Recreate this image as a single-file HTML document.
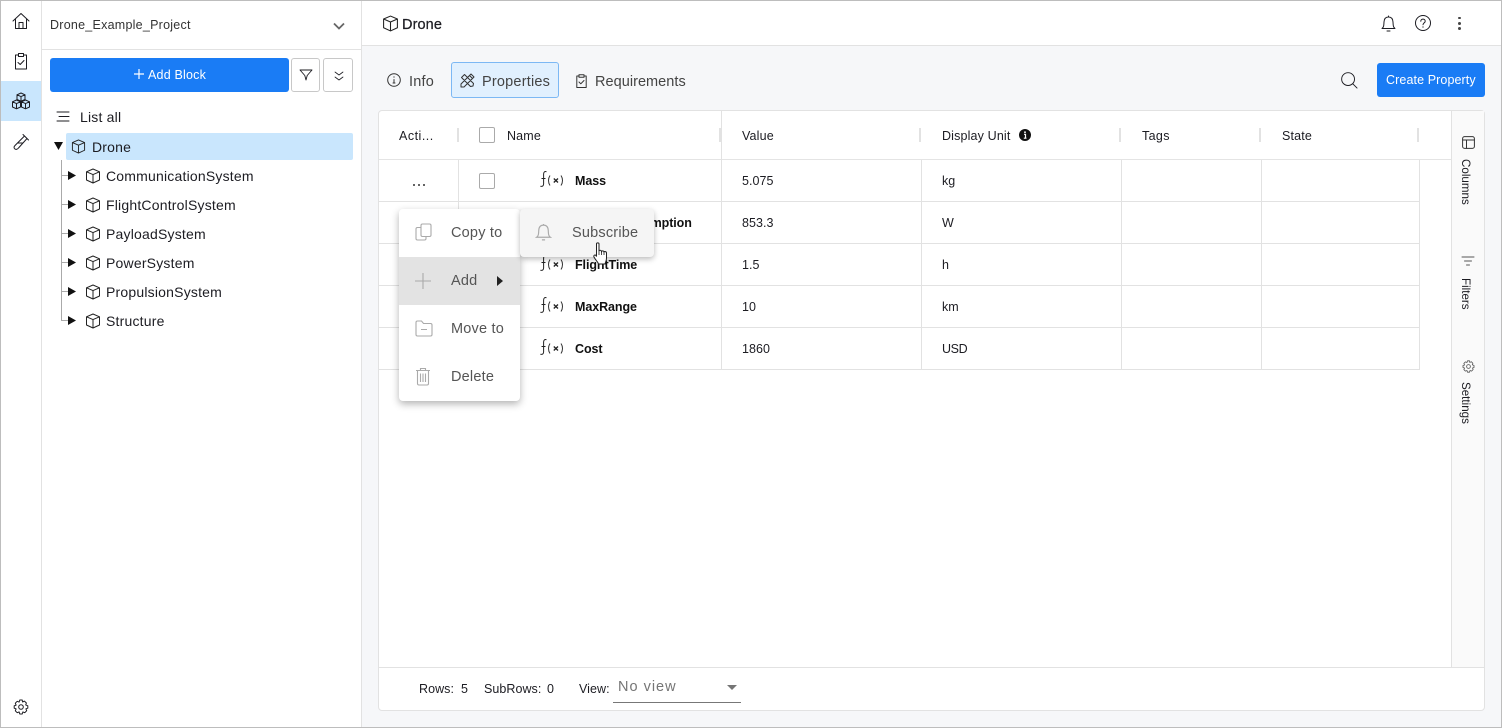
<!DOCTYPE html>
<html><head><meta charset="utf-8"><style>
html,body{margin:0;padding:0;background:#fff}
#p{position:relative;width:1502px;height:728px;overflow:hidden;background:#fff;font-family:"Liberation Sans",sans-serif;color:#1c1c22}
#p div,#p svg{position:absolute}
.t{white-space:nowrap;line-height:20px;height:20px}
.s{font-size:14px;letter-spacing:.2px}
.h{font-size:12.5px;letter-spacing:.15px;color:#1c1c22}
.c{font-size:12.5px;letter-spacing:.05px}
.b{font-size:12.5px;font-weight:bold;letter-spacing:-.08px;color:#111}
.m{font-size:14.5px;letter-spacing:.2px;color:#555}
.g{background:#e2e2e2}
.i{fill:none;stroke:#1c1c22;stroke-width:1;stroke-linejoin:round;stroke-linecap:round}
.v{writing-mode:vertical-rl;font-size:11.6px;letter-spacing:0;white-space:nowrap}
</style></head><body><div id="p">
<svg width="0" height="0"><defs>
<symbol id="cube" viewBox="0 0 16 16"><path d="M8 1 14.5 3.8V12L8 15 1.5 12V3.8ZM1.5 3.8 8 6.6 14.5 3.8M8 6.600V15" fill="none" stroke="currentColor" stroke-width="1" stroke-linejoin="round"/></symbol>
<symbol id="fx" viewBox="0 0 26 20"><path d="M8.500 2.800C6.800 2 5.700 3 5.600 5V15C5.500 17 4.400 17.800 2.300 17.200M3.500 9.500H7.500" fill="none" stroke="#222" stroke-width="1"/><path d="M12 6.500C10 9.500 10 13.500 12 16.500M23 6.500C25 9.500 25 13.500 23 16.500" fill="none" stroke="#333" stroke-width="1"/><path d="M15.800 9.500 20 13.500M20 9.500 15.800 13.500" fill="none" stroke="#222" stroke-width="1.300"/></symbol>
</defs></svg>

<!-- left rail -->
<div style="left:1px;top:81px;width:40px;height:40px;background:#c9e6fd"></div>
<div class="g" style="left:41px;top:0;width:1px;height:728px"></div>
<svg class="i" style="left:12px;top:12px" width="18" height="18" viewBox="0 0 18 18"><path d="M1 9 9 1.500 17 9M3.500 7.500V16.500H14.500V7.500M7 16.500V10.500H11V16.500"/></svg>
<svg class="i" style="left:14px;top:52px" width="14" height="18" viewBox="0 0 14 18"><path d="M4.500 3H1.500V17H12.500V3H9.500M4.500 1.500H9.500V4.500H4.500ZM4 10.500 6.200 12.500 10 8.500"/></svg>
<svg class="i" style="left:11px;top:92px" width="20" height="18" viewBox="0 0 20 18"><path d="M10 1 14 2.800V7.500L10 9.200 6 7.500V2.800ZM6 2.800 10 4.600 14 2.800M10 4.600V9.200M5.500 8 9.500 9.800V15L5.500 16.800 1.500 15V9.800ZM1.500 9.800 5.500 11.600 9.500 9.800M5.500 11.600V16.800M14.500 8 18.500 9.800V15L14.500 16.800 10.500 15V9.800ZM10.500 9.800 14.500 11.600 18.500 9.800M14.500 11.600V16.800"/></svg>
<svg class="i" style="left:12px;top:133px" width="18" height="18" viewBox="0 0 18 18"><path d="M11 1.500 16.500 7M12.500 3 3 12.500C1.500 14 2 15.500 3 16 4 16.700 5.500 16.300 6.500 15L15 5.500M5.500 10H11"/></svg>
<svg class="i" style="left:13px;top:699px" width="16" height="16" viewBox="0 0 16 16"><circle cx="8" cy="8" r="2.300"/><path d="M6.800 1H9.200L9.600 3 11.400 2.100 13.400 4 12.700 5.900 14.800 6.800V9.200L12.900 9.800 13.700 11.700 11.800 13.700 9.900 12.900 9.200 15H6.800L6.100 12.900 4.200 13.700 2.300 11.800 3.100 9.900 1.200 9.200V6.800L3.100 6.100 2.300 4.200 4.200 2.300 6.100 3.100Z"/></svg>

<!-- sidebar -->
<div class="g" style="left:361px;top:0;width:1px;height:728px"></div>
<div class="g" style="left:42px;top:49px;width:319px;height:1px"></div>
<div class="t" style="left:50px;top:15px;font-size:12.5px;letter-spacing:.25px;color:#333">Drone_Example_Project</div>
<svg style="left:333px;top:22px;fill:none;stroke:#666;stroke-width:1.800" width="12" height="8" viewBox="0 0 12 8"><path d="M1 1.500 6 6.500 11 1.500"/></svg>
<div style="left:50px;top:58px;width:239px;height:34px;background:#1a7cf5;border-radius:3px"></div>
<svg style="left:134px;top:69px;stroke:#fff;stroke-width:1.200" width="10" height="10"><path d="M5 0V10M0 5H10"/></svg>
<div class="t" style="left:148px;top:65px;color:#fff;font-size:12.5px;letter-spacing:.2px">Add Block</div>
<div style="left:291px;top:58px;width:27px;height:32px;border:1px solid #c8c8c8;border-radius:3px"></div>
<div style="left:323px;top:58px;width:28px;height:32px;border:1px solid #c8c8c8;border-radius:3px"></div>
<svg class="i" style="left:299px;top:69px;stroke-width:.9" width="14" height="12" viewBox="0 0 14 12"><path d="M1 1H13L8.200 6.500 7 11 5.800 6.500Z"/></svg>
<svg class="i" style="left:334px;top:71px;stroke-width:.8" width="10" height="10" viewBox="0 0 10 10"><path d="M1 1 5 4 9 1M1 6 5 9 9 6"/></svg>
<svg class="i" style="left:56px;top:111px" width="14" height="11" viewBox="0 0 14 11"><path d="M1 1H13M3 5.500H13M1 10H13"/></svg>
<div class="t s" style="left:80px;top:107px">List all</div>
<div style="left:66px;top:133px;width:287px;height:27px;background:#c9e6fd;border-radius:2px"></div>
<svg style="left:54px;top:142px" width="10" height="8"><path d="M0 0H9L4.500 8Z" fill="#111"/></svg>
<svg style="left:71px;top:139px;color:#222" width="15" height="15"><use href="#cube"/></svg>
<div class="t s" style="left:92px;top:137px">Drone</div>
<div style="left:61px;top:160px;width:1px;height:161px;background:#aaa"></div>
<div style="left:61px;top:175px;width:7px;height:1px;background:#aaa"></div>
<div style="left:61px;top:204px;width:7px;height:1px;background:#aaa"></div>
<div style="left:61px;top:233px;width:7px;height:1px;background:#aaa"></div>
<div style="left:61px;top:262px;width:7px;height:1px;background:#aaa"></div>
<div style="left:61px;top:291px;width:7px;height:1px;background:#aaa"></div>
<div style="left:61px;top:320px;width:7px;height:1px;background:#aaa"></div>
<svg style="left:68px;top:171px" width="8" height="9"><path d="M0 0 8 4.500 0 9Z" fill="#111"/></svg>
<svg style="left:68px;top:200px" width="8" height="9"><path d="M0 0 8 4.500 0 9Z" fill="#111"/></svg>
<svg style="left:68px;top:229px" width="8" height="9"><path d="M0 0 8 4.500 0 9Z" fill="#111"/></svg>
<svg style="left:68px;top:258px" width="8" height="9"><path d="M0 0 8 4.500 0 9Z" fill="#111"/></svg>
<svg style="left:68px;top:287px" width="8" height="9"><path d="M0 0 8 4.500 0 9Z" fill="#111"/></svg>
<svg style="left:68px;top:316px" width="8" height="9"><path d="M0 0 8 4.500 0 9Z" fill="#111"/></svg>
<svg style="left:85px;top:168px;color:#222" width="16" height="16"><use href="#cube"/></svg>
<svg style="left:85px;top:197px;color:#222" width="16" height="16"><use href="#cube"/></svg>
<svg style="left:85px;top:226px;color:#222" width="16" height="16"><use href="#cube"/></svg>
<svg style="left:85px;top:255px;color:#222" width="16" height="16"><use href="#cube"/></svg>
<svg style="left:85px;top:284px;color:#222" width="16" height="16"><use href="#cube"/></svg>
<svg style="left:85px;top:313px;color:#222" width="16" height="16"><use href="#cube"/></svg>
<div class="t s" style="left:106px;top:166px">CommunicationSystem</div>
<div class="t s" style="left:106px;top:195px">FlightControlSystem</div>
<div class="t s" style="left:106px;top:224px">PayloadSystem</div>
<div class="t s" style="left:106px;top:253px">PowerSystem</div>
<div class="t s" style="left:106px;top:282px">PropulsionSystem</div>
<div class="t s" style="left:106px;top:311px">Structure</div>

<!-- main background -->
<div style="left:362px;top:46px;width:1140px;height:682px;background:#f6f7f9"></div>
<div class="g" style="left:362px;top:45px;width:1140px;height:1px"></div>
<svg style="left:382px;top:15px;color:#222" width="17" height="17"><use href="#cube"/></svg>
<div class="t" style="left:402px;top:15px;font-size:14.5px;letter-spacing:.1px;-webkit-text-stroke:.25px #1c1c22">Drone</div>
<svg class="i" style="left:1381px;top:15px" width="15" height="18" viewBox="0 0 15 18"><path d="M1 13.500C3 12 2.800 10 3 7 3.200 3.500 5 2 7.500 2S11.800 3.500 12 7C12.200 10 12 12 14 13.500ZM6 16H9M7.500 2V1"/></svg>
<svg class="i" style="left:1415px;top:15px" width="16" height="16" viewBox="0 0 16 16"><circle cx="8" cy="8" r="7.500"/><path d="M5.800 6.200C5.800 3.500 10.200 3.500 10.200 6.200 10.200 7.800 8 8 8 9.800M8 11.800V12.200"/></svg>
<div style="left:1458px;top:16.500px;width:2.500px;height:2.500px;border-radius:2px;background:#444"></div>
<div style="left:1458px;top:22px;width:2.500px;height:2.500px;border-radius:2px;background:#444"></div>
<div style="left:1458px;top:27px;width:2.500px;height:2.500px;border-radius:2px;background:#444"></div>

<!-- tabs -->
<div style="left:451px;top:62px;width:106px;height:34px;background:#e1f0fe;border:1px solid #7cb8f4;border-radius:3px"></div>
<svg class="i" style="left:387px;top:73px;stroke:#333" width="14" height="14" viewBox="0 0 14 14"><circle cx="7" cy="7" r="6.300"/><path d="M7 6.500V10M6 10H8M7 3.800V4.300"/></svg>
<svg class="i" style="left:460px;top:73px;stroke:#333" width="15" height="15" viewBox="0 0 15 15"><path d="M1 11 11 1 14 4 4 14H1ZM9.500 2.500 12.500 5.500M3 3 1.500 4.500 10.500 13.500 13 13 13.500 10.500 4.500 1.500Z"/></svg>
<svg class="i" style="left:576px;top:74px;stroke:#333" width="11" height="14" viewBox="0 0 11 14"><path d="M3 2H.8V13.500H10.200V2H8M3 .8H8V3.200H3ZM3 8 4.800 9.800 8 6.500"/></svg>
<div class="t" style="left:409px;top:72px;font-size:14.500px;letter-spacing:.2px;color:#444">Info</div>
<div class="t" style="left:482px;top:72px;font-size:14.500px;letter-spacing:.2px;color:#444">Properties</div>
<div class="t" style="left:595px;top:72px;font-size:14.500px;letter-spacing:.04px;color:#444">Requirements</div>
<svg class="i" style="left:1341px;top:72px" width="17" height="17" viewBox="0 0 18 18"><circle cx="7.500" cy="7.500" r="6.800"/><path d="M12.500 12.500 17 17"/></svg>
<div style="left:1377px;top:63px;width:108px;height:34px;background:#1a7cf5;border-radius:3px"></div>
<div class="t" style="left:1386px;top:70px;color:#fff;font-size:12.500px;letter-spacing:.1px">Create Property</div>

<!-- table card -->
<div style="left:378px;top:110px;width:1105px;height:599px;background:#fff;border:1px solid #e2e2e2;border-radius:4px"></div>
<div style="left:1452px;top:111px;width:32px;height:556px;background:#fafafa"></div>
<div class="g" style="left:1451px;top:111px;width:1px;height:556px"></div>
<div class="g" style="left:379px;top:667px;width:1105px;height:1px"></div>
<div class="g" style="left:379px;top:159px;width:1072px;height:1px;background:#e4e4e4"></div>
<div class="g" style="left:379px;top:201px;width:1041px;height:1px"></div>
<div class="g" style="left:379px;top:243px;width:1041px;height:1px"></div>
<div class="g" style="left:379px;top:285px;width:1041px;height:1px"></div>
<div class="g" style="left:379px;top:327px;width:1041px;height:1px"></div>
<div class="g" style="left:379px;top:369px;width:1041px;height:1px"></div>
<div class="g" style="left:458px;top:160px;width:1px;height:210px"></div>
<div class="g" style="left:721px;top:111px;width:1px;height:259px"></div>
<div class="g" style="left:921px;top:160px;width:1px;height:210px"></div>
<div class="g" style="left:1121px;top:160px;width:1px;height:210px"></div>
<div class="g" style="left:1261px;top:160px;width:1px;height:210px"></div>
<div class="g" style="left:1419px;top:160px;width:1px;height:210px"></div>
<div class="g" style="left:457px;top:128px;width:2px;height:14px"></div>
<div class="g" style="left:719px;top:128px;width:2px;height:14px"></div>
<div class="g" style="left:919px;top:128px;width:2px;height:14px"></div>
<div class="g" style="left:1119px;top:128px;width:2px;height:14px"></div>
<div class="g" style="left:1259px;top:128px;width:2px;height:14px"></div>
<div class="g" style="left:1417px;top:128px;width:2px;height:14px"></div>
<div class="t h" style="left:399px;top:126px;letter-spacing:.5px">Acti...</div>
<div style="left:479px;top:127px;width:14px;height:14px;border:1px solid #aaa;border-radius:2px;background:#fff"></div>
<div class="t h" style="left:507px;top:126px">Name</div>
<div class="t h" style="left:742px;top:126px">Value</div>
<div class="t h" style="left:942px;top:126px">Display Unit</div>
<svg style="left:1019px;top:129px" width="12" height="12" viewBox="0 0 12 12"><circle cx="6" cy="6" r="6" fill="#111"/><path d="M5 5.300H6.500V9M4.800 9.200H7.500" stroke="#fff" fill="none" stroke-width="1.200"/><circle cx="6" cy="3.200" r=".9" fill="#fff"/></svg>
<div class="t h" style="left:1142px;top:126px;letter-spacing:.35px">Tags</div>
<div class="t h" style="left:1282px;top:126px">State</div>
<div style="left:413px;top:184px;width:2px;height:2px;background:#333;border-radius:1px"></div>
<div style="left:418px;top:184px;width:2px;height:2px;background:#333;border-radius:1px"></div>
<div style="left:423px;top:184px;width:2px;height:2px;background:#333;border-radius:1px"></div>
<div style="left:479px;top:173px;width:14px;height:14px;border:1px solid #aaa;border-radius:2px"></div>
<svg style="left:538px;top:169px" width="26" height="20"><use href="#fx"/></svg>
<svg style="left:538px;top:211px" width="26" height="20"><use href="#fx"/></svg>
<svg style="left:538px;top:253px" width="26" height="20"><use href="#fx"/></svg>
<svg style="left:538px;top:295px" width="26" height="20"><use href="#fx"/></svg>
<svg style="left:538px;top:337px" width="26" height="20"><use href="#fx"/></svg>
<div class="t b" style="left:575px;top:171px">Mass</div>
<div class="t b" style="left:575px;top:213px">PowerConsumption</div>
<div class="t b" style="left:575px;top:255px">FlightTime</div>
<div class="t b" style="left:575px;top:297px">MaxRange</div>
<div class="t b" style="left:575px;top:339px">Cost</div>
<div class="t c" style="left:742px;top:171px">5.075</div><div class="t c" style="left:942px;top:171px">kg</div>
<div class="t c" style="left:742px;top:213px">853.3</div><div class="t c" style="left:942px;top:213px">W</div>
<div class="t c" style="left:742px;top:255px">1.5</div><div class="t c" style="left:942px;top:255px">h</div>
<div class="t c" style="left:742px;top:297px">10</div><div class="t c" style="left:942px;top:297px">km</div>
<div class="t c" style="left:742px;top:339px">1860</div><div class="t c" style="left:942px;top:339px;letter-spacing:-.4px">USD</div>

<!-- side panel -->
<svg class="i" style="left:1462px;top:136px;stroke:#333" width="13" height="13" viewBox="0 0 13 13"><rect x=".6" y=".6" width="11.800" height="11.800" rx="2"/><path d="M.6 4H12.400M4.500 4V12.400"/></svg>
<div class="v" style="left:1459px;top:159px">Columns</div>
<svg class="i" style="left:1461px;top:256px;stroke:#555" width="14" height="11" viewBox="0 0 14 11"><path d="M1 1H13M3.500 5H10.500M5.500 9H8.500"/></svg>
<div class="v" style="left:1459px;top:278px">Filters</div>
<svg class="i" style="left:1462px;top:360px;stroke:#555" width="13" height="13" viewBox="0 0 16 16"><circle cx="8" cy="8" r="2.300"/><path d="M6.800 1H9.200L9.600 3 11.400 2.100 13.400 4 12.700 5.900 14.800 6.800V9.200L12.900 9.800 13.700 11.700 11.800 13.700 9.900 12.900 9.200 15H6.800L6.100 12.900 4.200 13.700 2.300 11.800 3.100 9.900 1.200 9.200V6.800L3.100 6.100 2.300 4.200 4.200 2.300 6.100 3.100Z"/></svg>
<div class="v" style="left:1459px;top:382px">Settings</div>

<!-- footer -->
<div class="t c" style="left:419px;top:679px">Rows:</div><div class="t c" style="left:461px;top:679px">5</div>
<div class="t c" style="left:484px;top:679px">SubRows:</div><div class="t c" style="left:547px;top:679px">0</div>
<div class="t c" style="left:579px;top:679px">View:</div>
<div class="t" style="left:618px;top:677px;font-size:14.500px;letter-spacing:1px;color:#757575">No view</div>
<svg style="left:727px;top:685px" width="10" height="5"><path d="M0 0H10L5 5Z" fill="#757575"/></svg>
<div style="left:613px;top:702px;width:128px;height:1px;background:#777"></div>

<!-- context menu -->
<div style="left:399px;top:209px;width:121px;height:192px;background:#fff;border-radius:4px;box-shadow:0 3px 8px rgba(0,0,0,.3)"></div>
<div style="left:399px;top:257px;width:121px;height:48px;background:#e3e3e3"></div>
<svg style="left:415px;top:223px;fill:none;stroke:#aaa;stroke-width:1.100" width="17" height="18" viewBox="0 0 17 18"><path d="M6 2.500C6 1.500 6.700 1 7.500 1H14.500C15.500 1 16 1.500 16 2.500V12C16 13 15.500 13.500 14.500 13.500H7.500C6.700 13.500 6 13 6 12ZM6 4.500H2.500C1.500 4.500 1 5 1 6V15.500C1 16.500 1.500 17 2.500 17H9.500C10.500 17 11 16.500 11 15.500V13.500"/></svg>
<svg style="left:415px;top:273px;stroke:#aaa;stroke-width:1.100" width="16" height="16"><path d="M8 0V16M0 8H16"/></svg>
<svg style="left:415px;top:320px;fill:none;stroke:#aaa;stroke-width:1.100" width="18" height="17" viewBox="0 0 18 17"><path d="M1 2.500C1 1.500 1.500 1 2.500 1H6.500L8.500 3.500H15.500C16.500 3.500 17 4 17 5V14.500C17 15.500 16.500 16 15.500 16H2.500C1.500 16 1 15.500 1 14.500ZM6 9.500H12"/></svg>
<svg style="left:415px;top:367px;fill:none;stroke:#aaa;stroke-width:1.100" width="16" height="19" viewBox="0 0 16 19"><path d="M1 3.500H15M5.500 3.500V1.500H10.500V3.500M2.500 3.500V16.500C2.500 17.500 3 18 4 18H12C13 18 13.500 17.500 13.500 16.500V3.500M5.500 6.500V15M8 6.500V15M10.500 6.500V15"/></svg>
<div class="t m" style="left:451px;top:223px">Copy to</div>
<div class="t m" style="left:451px;top:271px">Add</div>
<svg style="left:497px;top:276px" width="6" height="10"><path d="M0 0 6 5 0 10Z" fill="#222"/></svg>
<div class="t m" style="left:451px;top:319px">Move to</div>
<div class="t m" style="left:451px;top:367px">Delete</div>

<!-- submenu -->
<div style="left:520px;top:209px;width:134px;height:48px;background:#f5f5f5;border-radius:4px;box-shadow:0 2px 6px rgba(0,0,0,.28)"></div>
<svg style="left:535px;top:223px;fill:none;stroke:#aaa;stroke-width:1.100" width="17" height="19" viewBox="0 0 15 18"><path d="M1 13.500C3 12 2.800 10 3 7 3.200 3.500 5 2 7.500 2S11.800 3.500 12 7C12.200 10 12 12 14 13.500ZM6 16H9M7.500 2V1"/></svg>
<div class="t m" style="left:572px;top:223px">Subscribe</div>

<!-- hand cursor -->
<svg style="left:592px;top:242px" width="17" height="26" viewBox="0 0 17 26"><path d="M4.500 2C4.500 .5 7 .5 7 2V9C7.500 8 9.300 8 9.500 9.500 10 8.500 11.800 8.700 12 10 12.500 9.200 14.500 9.500 14.500 11V16C14.500 19 13.500 20 13 22H6.500C6 20 3.500 18 2 15 1.300 13.500 2.800 12.300 4 13.500L4.500 14.500Z" fill="#fff" stroke="#222" stroke-width="1"/><path d="M7 9V13M9.500 9.500V13M12 10V13" stroke="#222" fill="none" stroke-width=".8"/></svg>

<!-- outer frame -->
<div style="left:0;top:0;width:1500px;height:726px;border:1px solid #bdbdbd"></div>
</div></body></html>
